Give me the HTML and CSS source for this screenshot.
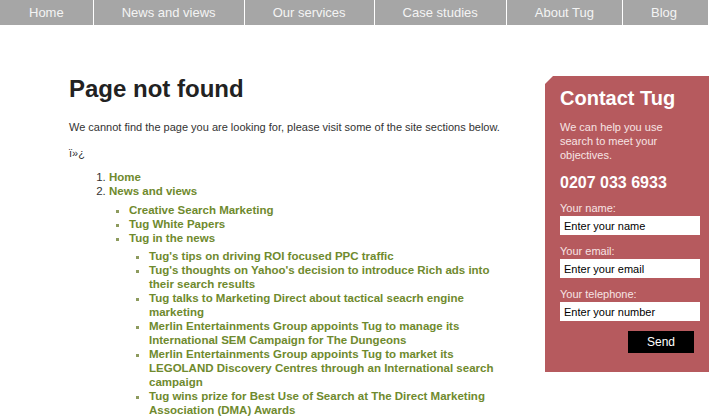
FILE: index.html
```html
<!DOCTYPE html>
<html lang="en">
<head>
    <meta charset="UTF-8">
    <meta name="viewport" content="width=device-width, initial-scale=1.0">
    <title>Page not found - Tug</title>
    <link rel="stylesheet" href="styles.css">
</head>
<body>
    <ul class="nav">
        <li><a href="#">Home</a></li>
        <li><a href="#">News and views</a></li>
        <li><a href="#">Our services</a></li>
        <li><a href="#">Case studies</a></li>
        <li><a href="#">About Tug</a></li>
        <li><a href="#">Blog</a></li>
    </ul>

    <div class="page">
        <div class="content">
            <h1>Page not found</h1>
            <p>We cannot find the page you are looking for, please visit some of the site sections below.</p>
            <p class="bom">ï»¿</p>
            <ol class="sitemap">
                <li><a href="#">Home</a></li>
                <li><a href="#">News and views</a>
                    <ul>
                        <li><a href="#">Creative Search Marketing</a></li>
                        <li><a href="#">Tug White Papers</a></li>
                        <li><a href="#">Tug in the news</a>
                            <ul class="news">
                                <li><a href="#">Tug's tips on driving ROI focused PPC traffic</a></li>
                                <li><a href="#">Tug's thoughts on Yahoo's decision to introduce Rich ads into their search results</a></li>
                                <li><a href="#">Tug talks to Marketing Direct about tactical seacrh engine marketing</a></li>
                                <li><a href="#">Merlin Entertainments Group appoints Tug to manage its International SEM Campaign for The Dungeons</a></li>
                                <li><a href="#">Merlin Entertainments Group appoints Tug to market its LEGOLAND Discovery Centres through an International search campaign</a></li>
                                <li><a href="#">Tug wins prize for Best Use of Search at The Direct Marketing Association (DMA) Awards</a></li>
                            </ul>
                        </li>
                    </ul>
                </li>
            </ol>
        </div>

        <div class="contact">
            <h2>Contact Tug</h2>
            <p>We can help you use search to meet your objectives.</p>
            <div class="phone">0207 033 6933</div>
            <form>
                <label for="name">Your name:</label>
                <input type="text" id="name" value="Enter your name">
                <label for="email">Your email:</label>
                <input type="text" id="email" value="Enter your email">
                <label for="tel">Your telephone:</label>
                <input type="text" id="tel" value="Enter your number">
                <div class="actions">
                    <button type="button">Send</button>
                </div>
            </form>
        </div>
    </div>
</body>
</html>
```

FILE: styles.css
```css
body {
    margin: 0;
    font-family: "Liberation Sans", Arial, sans-serif;
    font-size: 12px;
    color: #333;
    background: #fff;
}
.nav {
    display: flex;
    list-style: none;
    margin: 0;
    padding: 0;
    width: 708px;
    background-color: #a6a6a6;
}
.nav li {
    flex: 0 0 auto;
    border-right: 1px solid #fff;
}
.nav li:last-child {
    flex: 1 1 auto;
    border-right: none;
}
.nav a {
    display: block;
    height: 25px;
    line-height: 26px;
    padding: 0 28px;
    color: #f4f4f4;
    font-size: 13px;
    text-decoration: none;
}
.nav li:first-child a {
    padding: 0 29px;
}
.page {
    display: flex;
    align-items: flex-start;
}
.content {
    width: 435px;
    margin: 50px 0 0 69px;
}
h1 {
    margin: 0 0 17px 0;
    font-size: 24px;
    color: #222;
}
.content p {
    margin: 0 0 12px 0;
    line-height: 14px;
    font-size: 11px;
}
.content p.bom {
    margin-bottom: 10px;
}
.sitemap {
    margin: 0;
    padding-left: 40px;
    line-height: 14px;
    font-size: 11.5px;
}
.sitemap a {
    color: #6f8a2e;
    font-weight: bold;
    text-decoration: none;
}
.sitemap ul {
    list-style: square;
    color: #8d9b5e;
    margin: 5px 0 0 0;
    padding-left: 20px;
}
.sitemap ul.news {
    margin-top: 4px;
}
.contact {
    width: 134px;
    margin: 51px 0 0 41px;
    padding: 11px 15px 19px 15px;
    background-color: #b65a5e;
    color: #f6e4e4;
    clip-path: polygon(8px 0, 100% 0, 100% 100%, 0 100%, 0 8px);
}
.contact h2 {
    margin: 0 0 10px 0;
    font-size: 20px;
    color: #fff;
}
.contact p {
    margin: 0 0 12px 0;
    font-size: 11px;
    line-height: 14px;
}
.phone {
    font-size: 16px;
    font-weight: bold;
    color: #fff;
    margin-bottom: 10px;
}
.contact label {
    display: block;
    font-size: 11px;
    line-height: 13px;
}
.contact input {
    display: block;
    width: 140px;
    height: 19px;
    margin: 1px 0 10px 0;
    padding: 0 4px;
    border: none;
    box-sizing: border-box;
    font-family: "Liberation Sans", Arial, sans-serif;
    font-size: 11px;
    color: #000;
}
.actions {
    display: flex;
    justify-content: flex-end;
}
.contact button {
    width: 66px;
    height: 22px;
    border: none;
    background-color: #000;
    color: #fff;
    font-family: "Liberation Sans", Arial, sans-serif;
    font-size: 12px;
    cursor: pointer;
}
```
